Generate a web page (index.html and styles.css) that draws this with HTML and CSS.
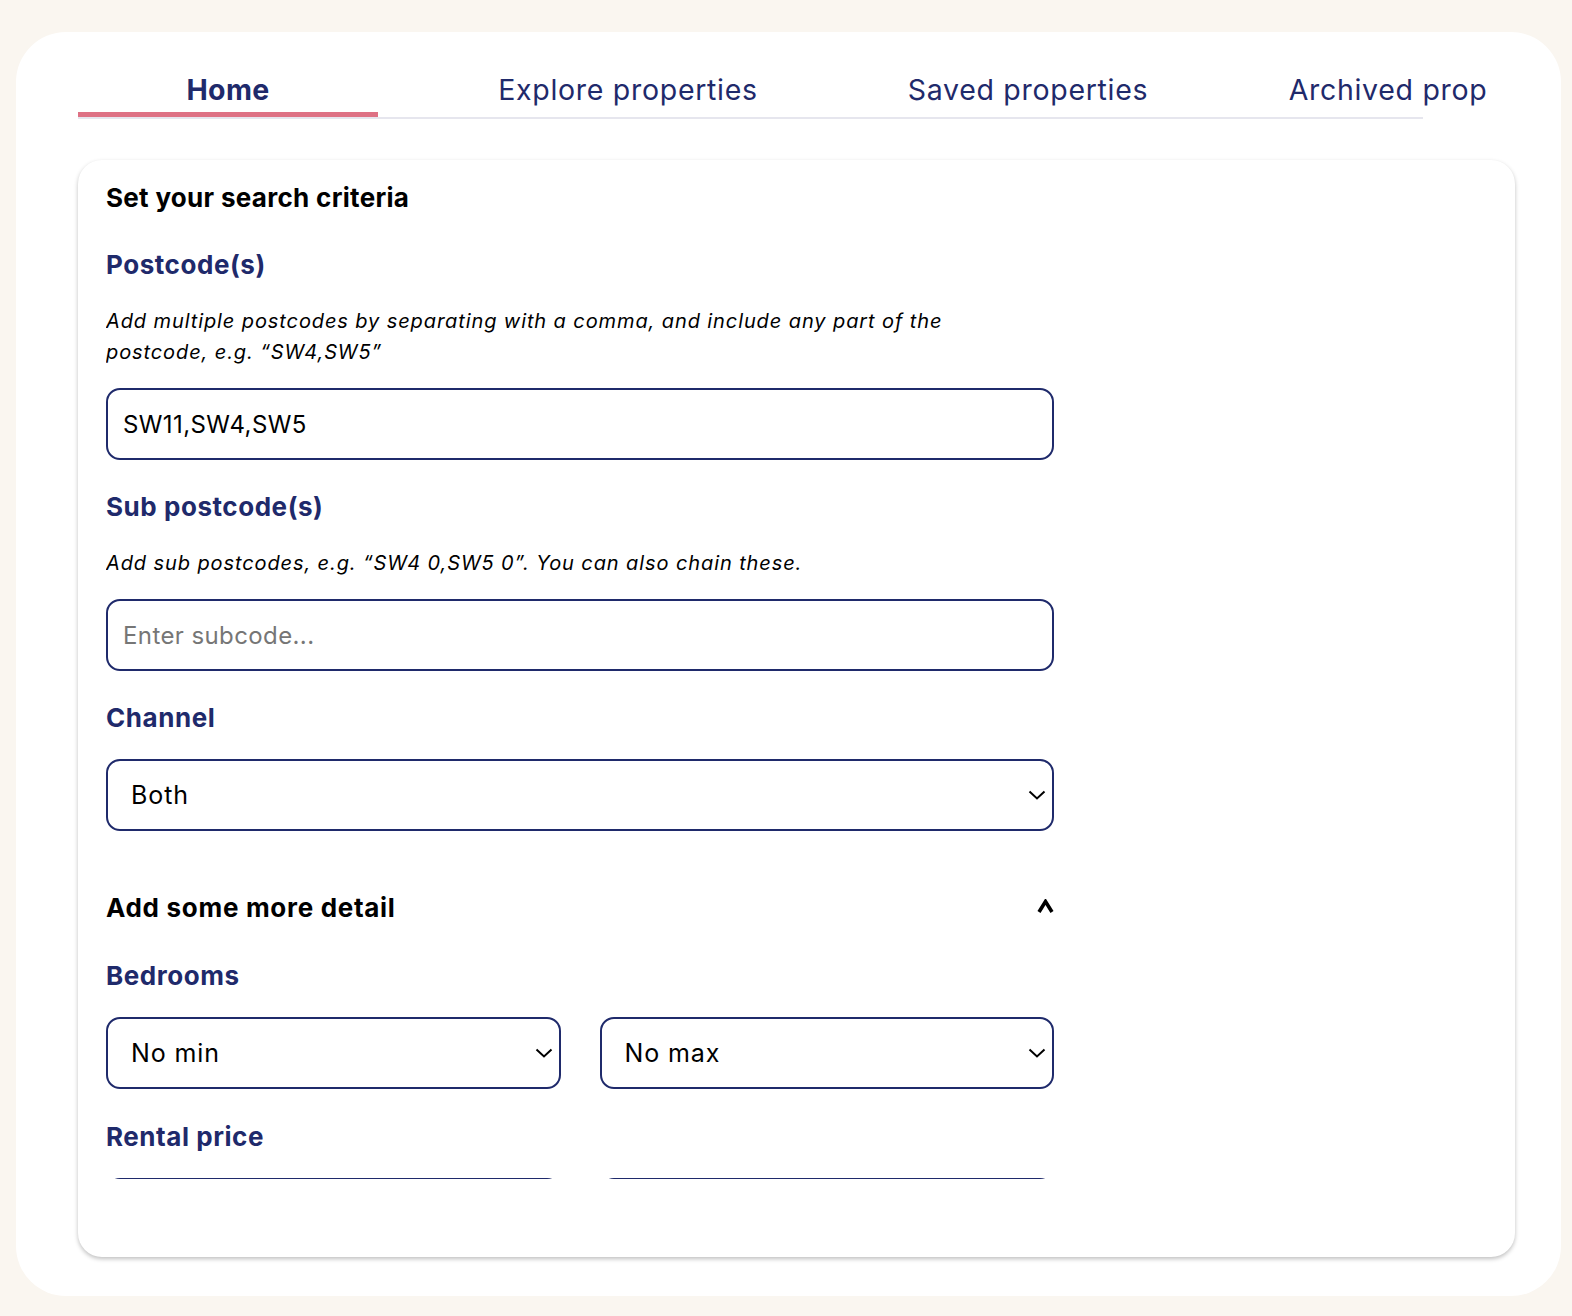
FILE: index.html
```html
<!DOCTYPE html>
<html lang="en">
<head>
<meta charset="utf-8">
<title>Search criteria</title>
<link rel="stylesheet" href="styles.css">
</head>
<body>
<div class="panel">
  <div class="tabs-wrap">
    <nav class="tabs">
      <a class="tab active">Home</a>
      <a class="tab">Explore properties</a>
      <a class="tab">Saved properties</a>
      <a class="tab">Archived properties</a>
    </nav>
  </div>
  <section class="card">
    <div class="scroll">
      <h2 class="title">Set your search criteria</h2>

      <div class="label">Postcode(s)</div>
      <p class="hint">Add multiple postcodes by separating with a comma, and include any part of the<br>postcode, e.g. “SW4,SW5”</p>
      <input class="field" type="text" value="SW11,SW4,SW5">

      <div class="label">Sub postcode(s)</div>
      <p class="hint">Add sub postcodes, e.g. “SW4 0,SW5 0”. You can also chain these.</p>
      <input class="field" type="text" placeholder="Enter subcode...">

      <div class="label">Channel</div>
      <div class="select-wrap field-gap">
        <select class="select"><option>Both</option></select>
        <svg class="chev" width="18" height="10" viewBox="0 0 18 10"><path d="M1.5 1.5 L9 8.5 L16.5 1.5" fill="none" stroke="#000" stroke-width="2"/></svg>
      </div>

      <div class="more">
        <span>Add some more detail</span>
        <svg class="caret" width="17" height="14" viewBox="0 0 17 14" aria-label="^"><path d="M2 13 L8.5 2.5 L15 13" fill="none" stroke="#000" stroke-width="3.6" stroke-linejoin="miter"/></svg>
      </div>

      <div class="label">Bedrooms</div>
      <div class="pair">
        <div class="select-wrap">
          <select class="select"><option>No min</option></select>
          <svg class="chev" width="18" height="10" viewBox="0 0 18 10"><path d="M1.5 1.5 L9 8.5 L16.5 1.5" fill="none" stroke="#000" stroke-width="2"/></svg>
        </div>
        <div class="select-wrap">
          <select class="select"><option>No max</option></select>
          <svg class="chev" width="18" height="10" viewBox="0 0 18 10"><path d="M1.5 1.5 L9 8.5 L16.5 1.5" fill="none" stroke="#000" stroke-width="2"/></svg>
        </div>
      </div>

      <div class="label">Rental price</div>
      <div class="pair">
        <div class="select-wrap">
          <select class="select"><option>No min</option></select>
        </div>
        <div class="select-wrap">
          <select class="select"><option>No max</option></select>
        </div>
      </div>
    </div>
  </section>
</div>
</body>
</html>
```

FILE: styles.css
```css
* { box-sizing: border-box; }

html, body {
  margin: 0;
  padding: 0;
  background: #faf6f0;
}

body {
  font-family: Inter, "Open Sans", "Liberation Sans", sans-serif;
  color: #000;
  padding: 32px 11px 20px 16px;
}

.panel {
  background: #fff;
  border-radius: 50px;
  padding: 36px 46px 39px 62px;
  height: 1264px;
}

.tabs-wrap {
  margin-right: 28px;
  overflow: hidden;
}

.tabs {
  display: flex;
  gap: 100px;
  width: 1345px;
  border-bottom: 2px solid #e6e6ee;
}

.tab {
  flex: 0 0 300px;
  text-align: center;
  white-space: nowrap;
  font-size: 28.5px;
  line-height: 44px;
  color: #1f2a6b;
  border-bottom: 5px solid transparent;
  letter-spacing: 0.7px;
}

.tab.active {
  font-weight: 700;
  border-bottom-color: #de7184;
  letter-spacing: 0.3px;
}

.card {
  margin-top: 41px;
  background: #fff;
  border-radius: 24px;
  box-shadow: 0 2px 4px rgba(0, 0, 0, 0.25);
  padding: 0 28px 78px;
}

.scroll {
  height: 1019px;
  overflow: hidden;
  padding-top: 20px;
  width: 948px;
}

.title {
  margin: 0 0 31px;
  font-size: 26px;
  line-height: 36px;
  font-weight: 700;
  letter-spacing: 0.3px;
}

.label {
  font-size: 26px;
  line-height: 36px;
  font-weight: 700;
  color: #1f2a6b;
  margin-bottom: 23px;
  letter-spacing: 0.55px;
}

.hint {
  margin: 0 0 20px;
  font-size: 20px;
  line-height: 31px;
  font-style: italic;
  letter-spacing: 0.9px;
}

.field {
  display: block;
  width: 100%;
  height: 72px;
  border: 2px solid #1f2a6b;
  border-radius: 14px;
  padding: 0 15px;
  font-family: inherit;
  font-size: 24px;
  letter-spacing: 0.4px;
  color: #000;
  background: #fff;
  margin: 0 0 29px;
  outline: none;
}

.field::placeholder {
  color: #767676;
}

.select-wrap {
  position: relative;
}

.field-gap {
  margin-bottom: 59px;
}

.select {
  display: block;
  width: 100%;
  height: 72px;
  border: 2px solid #1f2a6b;
  border-radius: 14px;
  padding: 0 40px 0 23px;
  font-family: inherit;
  font-size: 25px;
  letter-spacing: 0.9px;
  color: #000;
  background: #fff;
  appearance: none;
  -webkit-appearance: none;
  outline: none;
}

.chev {
  position: absolute;
  right: 8px;
  top: 31px;
  pointer-events: none;
}

.more {
  display: flex;
  justify-content: space-between;
  align-items: center;
  font-size: 26px;
  line-height: 36px;
  font-weight: 700;
  margin-bottom: 32px;
  letter-spacing: 0.7px;
}

.caret {
  display: block;
  margin-top: -4px;
}

.pair {
  display: grid;
  grid-template-columns: 1fr 1fr;
  gap: 39px;
  margin-bottom: 30px;
}
```
